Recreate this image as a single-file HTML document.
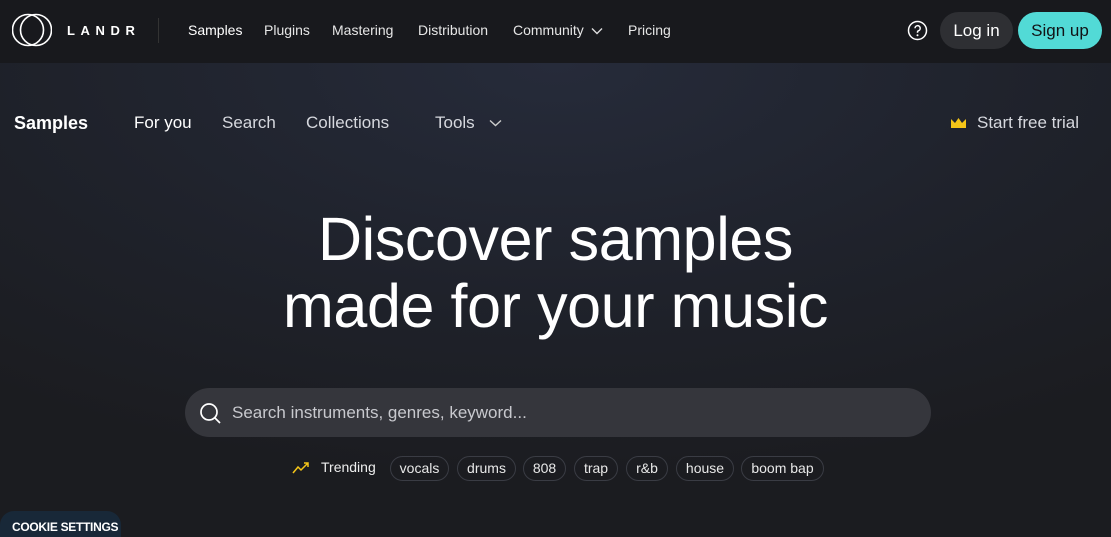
<!DOCTYPE html>
<html><head><style>
*{margin:0;padding:0;box-sizing:border-box}
html,body{width:1111px;height:537px;overflow:hidden}
body{font-family:"Liberation Sans",sans-serif;background:#1b1c20;color:#fff;position:relative}
.hdr{position:absolute;left:0;top:0;width:1111px;height:63px;background:#18191d}
.main{position:absolute;left:0;top:63px;width:1111px;height:474px;background:radial-gradient(ellipse 900px 420px at 50% 0%,#262b3a 0%,#1f222b 55%,#1b1c20 100%)}
.a{position:absolute;white-space:nowrap}
.nav{font-size:14px;color:#e6e6e6;top:22px}
.sub{font-size:17px;color:#d6d8de;top:113px}
.pill{position:absolute;top:456px;height:25px;border:1px solid #3a3c44;border-radius:13px;font-size:14px;color:#e8e8e8;line-height:23px;text-align:center}
</style></head><body>
<div class="hdr"></div>
<div class="main"></div>
<svg class="a" style="left:12px;top:12px" width="40" height="36" viewBox="0 0 40 36"><circle cx="16" cy="18" r="15.5" fill="none" stroke="#fff" stroke-width="1.6"/><circle cx="24" cy="18" r="15.5" fill="none" stroke="#fff" stroke-width="1.6"/></svg>
<div class="a" style="left:67px;top:23px;font-size:13px;letter-spacing:5.6px;font-weight:bold">LANDR</div>
<div class="a" style="left:158px;top:18px;width:1px;height:25px;background:#333"></div>
<div class="a nav" style="left:188px;color:#fff">Samples</div>
<div class="a nav" style="left:264px">Plugins</div>
<div class="a nav" style="left:332px">Mastering</div>
<div class="a nav" style="left:418px">Distribution</div>
<div class="a nav" style="left:513px">Community</div>
<svg class="a" style="left:591px;top:27px" width="12" height="8"><path d="M1 1.5l5 5 5-5" stroke="#ddd" stroke-width="1.4" fill="none"/></svg>
<div class="a nav" style="left:628px">Pricing</div>
<svg class="a" style="left:907px;top:20px" width="21" height="21"><circle cx="10.5" cy="10.5" r="9" fill="none" stroke="#fff" stroke-width="1.5"/><path d="M8 8.3a2.6 2.6 0 1 1 3.5 2.4c-.7.3-1 .8-1 1.5v.6" stroke="#fff" stroke-width="1.5" fill="none"/><circle cx="10.5" cy="15.3" r="1" fill="#fff"/></svg>
<div class="a" style="left:940px;top:12px;width:73px;height:37px;border-radius:19px;background:#2e2f33;font-size:17px;line-height:37px;text-align:center">Log in</div>
<div class="a" style="left:1018px;top:12px;width:84px;height:37px;border-radius:19px;background:#52dad6;color:#121316;font-size:17px;line-height:37px;text-align:center">Sign up</div>
<div class="a" style="left:14px;top:113px;font-size:18px;font-weight:bold">Samples</div>
<div class="a sub" style="left:134px;color:#fff">For you</div>
<div class="a sub" style="left:222px">Search</div>
<div class="a sub" style="left:306px">Collections</div>
<div class="a sub" style="left:435px">Tools</div>
<svg class="a" style="left:489px;top:119px" width="13" height="8"><path d="M1 1.5l5.5 5 5.5-5" stroke="#ccc" stroke-width="1.4" fill="none"/></svg>
<svg class="a" style="left:951px;top:117px" width="15" height="12"><path d="M0 2l4 4 3.5-5 3.5 5 4-4v9H0z" fill="#f5c518"/></svg>
<div class="a sub" style="left:977px">Start free trial</div>
<div class="a" style="left:0;top:206px;width:1111px;text-align:center;font-size:61px;line-height:67px;letter-spacing:-0.4px">Discover samples<br>made for your music</div>
<div class="a" style="left:185px;top:388px;width:746px;height:49px;border-radius:25px;background:#35363c"></div>
<svg class="a" style="left:199px;top:402px" width="24" height="24"><circle cx="10" cy="10" r="8" fill="none" stroke="#fff" stroke-width="1.7"/><path d="M16 16l5 5" stroke="#fff" stroke-width="1.7"/></svg>
<div class="a" style="left:232px;top:403px;font-size:17px;color:#c8c9ce">Search instruments, genres, keyword...</div>
<svg class="a" style="left:292px;top:461px" width="20" height="14"><path d="M1 12l5-6 3 3 7-7M12 2h4v4" stroke="#f5c518" stroke-width="1.5" fill="none"/></svg>
<div class="a" style="left:321px;top:459px;font-size:14px;color:#eee">Trending</div>
<div class="pill" style="left:390px;width:59px">vocals</div>
<div class="pill" style="left:457px;width:59px">drums</div>
<div class="pill" style="left:523px;width:43px">808</div>
<div class="pill" style="left:574px;width:44px">trap</div>
<div class="pill" style="left:626px;width:42px">r&amp;b</div>
<div class="pill" style="left:676px;width:58px">house</div>
<div class="pill" style="left:741px;width:83px">boom bap</div>
<div class="a" style="left:0;top:511px;width:121px;height:26px;border-radius:14px 14px 0 0;background:#182838;font-size:12px;font-weight:bold;padding:9px 0 0 12px;letter-spacing:-0.3px">COOKIE SETTINGS</div>
</body></html>
